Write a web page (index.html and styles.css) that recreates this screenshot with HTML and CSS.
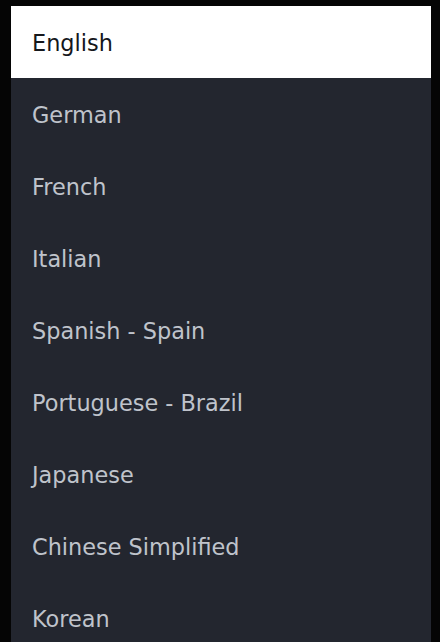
FILE: index.html
```html
<!DOCTYPE html>
<html lang="en">
<head>
    <meta charset="UTF-8">
    <meta name="viewport" content="width=device-width, initial-scale=1.0">
    <title>Language</title>
    <link rel="stylesheet" href="styles.css">
</head>
<body>
    <ul class="lang-list">
        <li class="lang-item selected">English</li>
        <li class="lang-item">German</li>
        <li class="lang-item">French</li>
        <li class="lang-item">Italian</li>
        <li class="lang-item">Spanish - Spain</li>
        <li class="lang-item">Portuguese - Brazil</li>
        <li class="lang-item">Japanese</li>
        <li class="lang-item">Chinese Simplified</li>
        <li class="lang-item">Korean</li>
    </ul>
</body>
</html>
```

FILE: styles.css
```css
html, body {
    height: 100%;
}
body {
    margin: 0;
    padding: 6px 9px 0 11px;
    box-sizing: border-box;
    background-color: #050505;
    font-family: "DejaVu Sans", "Noto Sans", sans-serif;
    overflow: hidden;
}
.lang-list {
    list-style: none;
    margin: 0;
    padding: 0;
    width: 420px;
    background-color: #23262f;
}
.lang-item {
    height: 72px;
    box-sizing: border-box;
    display: flex;
    align-items: center;
    padding: 2px 0 0 21px;
    font-size: 22.4px;
    color: #bfc3cb;
}
.lang-item.selected {
    background-color: #fff;
    color: #15171c;
}
```
